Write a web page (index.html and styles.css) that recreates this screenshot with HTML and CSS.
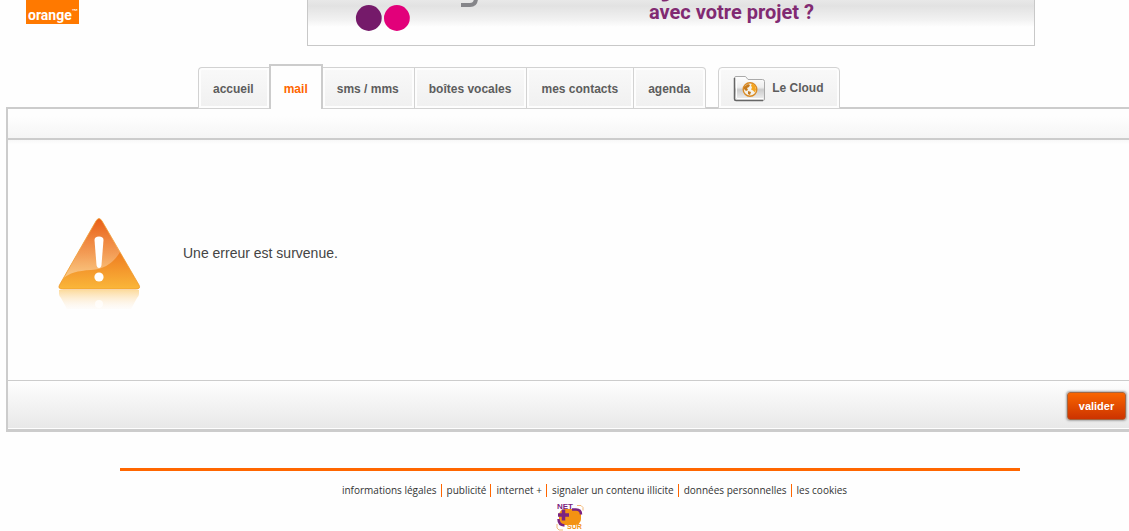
FILE: index.html
```
<!DOCTYPE html>
<html lang="fr">
<head>
    <meta charset="UTF-8">
    <meta name="viewport" content="width=device-width, initial-scale=1.0">
    <title>Orange - mail</title>
    <link rel="stylesheet" href="styles.css">
</head>
<body>

    <header class="header">
        <a class="logo" href="#"><span class="logo-name">orange</span><span class="logo-tm">™</span></a>
        <a class="banner" href="#">
            <svg class="banner-art" width="130" height="45" viewBox="0 0 130 45" aria-hidden="true">
                <circle cx="19.800" cy="18" r="12.900" fill="#751a6a"/>
                <circle cx="47.900" cy="18" r="12.900" fill="#e2007a"/>
                <path d="M112 5h9q6 0 6-7" fill="none" stroke="#858589" stroke-width="4"/>
            </svg>
            <span class="banner-text">
                <svg class="banner-tail" width="10" height="2" viewBox="0 0 10 2" aria-hidden="true">
                    <path d="M1 0q3 1.500 7-1" fill="none" stroke="#812a72" stroke-width="2"/>
                </svg>
                avec votre projet ?
            </span>
        </a>
    </header>

    <nav class="tabs">
        <a class="tab first" href="#">accueil</a>
        <a class="tab active" href="#">mail</a>
        <a class="tab" href="#">sms / mms</a>
        <a class="tab" href="#">boîtes vocales</a>
        <a class="tab" href="#">mes contacts</a>
        <a class="tab last" href="#">agenda</a>
        <a class="tab cloud" href="#">
            <svg width="33" height="27" viewBox="0 0 33 27" aria-hidden="true">
                <defs>
                    <linearGradient id="folder" x1="0" y1="0" x2="0" y2="1">
                        <stop offset="0" stop-color="#fff"/>
                        <stop offset=".45" stop-color="#eee"/>
                        <stop offset=".55" stop-color="#ccc"/>
                        <stop offset="1" stop-color="#f4f4f4"/>
                    </linearGradient>
                </defs>
                <path d="M1.500 24V3q0-1.500 1.500-1.500h9.500l2.500 3h14.500q2 0 2 2V24q0 1.500-1.500 1.500H3q-1.500 0-1.500-1.500z" fill="url(#folder)" stroke="#aaa"/>
                <path d="M1.500 3v21q0 1.500 1.500 1.500h27" fill="none" stroke="#666" stroke-width="1.500"/>
                <path d="M3.500 23V6M4 23.500h26" fill="none" stroke="#fff"/>
                <circle cx="17" cy="14.500" r="6.800" fill="#f4f1e8" stroke="#d98a24" stroke-width="1.400"/>
                <path d="M11 12l4-3 2 1-1 2-2 1 1 2-2 1-2-2z" fill="#c77a1b"/>
                <path d="M15 16l3 1-1 3-2-1z" fill="#c77a1b"/>
                <path d="M19 8.500l3 2 1 4-1 3-2-2-2-1 1-2-1-2z" fill="#f5a51e"/>
            </svg>
            <span>Le Cloud</span>
        </a>
    </nav>

    <main class="panel">
        <div class="toolbar"></div>
        <div class="message">
            <svg class="warning" width="86" height="94" viewBox="0 0 86 94" aria-hidden="true">
                <defs>
                    <linearGradient id="tri" x1="0" y1="0" x2="0" y2="1">
                        <stop offset="0" stop-color="#e95d16"/>
                        <stop offset=".5" stop-color="#ef7e22"/>
                        <stop offset="1" stop-color="#fab73a"/>
                    </linearGradient>
                    <linearGradient id="shine" x1="0" y1="0" x2="0" y2="1">
                        <stop offset="0" stop-color="#fff" stop-opacity="0"/>
                        <stop offset="1" stop-color="#fff" stop-opacity=".4"/>
                    </linearGradient>
                    <linearGradient id="mirror" x1="0" y1="0" x2="0" y2="1">
                        <stop offset="0" stop-color="#fab73a" stop-opacity=".5"/>
                        <stop offset="1" stop-color="#fce8d4" stop-opacity=".1"/>
                    </linearGradient>
                </defs>
                <path d="M3 73h80v4q0 2-2 4l-6 11H11L5 81q-2-2-2-4z" fill="url(#mirror)"/>
                <ellipse cx="43" cy="87" rx="4" ry="4" fill="#fff" opacity=".7"/>
                <path d="M40 4q3-5 6 0l37 64q2 4-3 4H6.500q-5 0-3-4z" fill="url(#tri)" stroke="#f09a2c" stroke-width=".8"/>
                <path d="M40 4q3-5 6 0l18 31Q54 52 35 53 15 54 8 61z" fill="url(#shine)"/>
                <path d="M38.500 23q0-3.500 4.500-3.500t4.500 3.500L45.500 48q-.5 3-2.500 3t-2.500-3z" fill="#fff"/>
                <circle cx="43" cy="60" r="4.600" fill="#fff"/>
            </svg>
            <p>Une erreur est survenue.</p>
        </div>
        <div class="actions">
            <button type="button" class="valider">valider</button>
        </div>
    </main>

    <footer class="footer">
        <div class="footer-inner">
            <ul class="links">
                <li><a href="#">informations légales</a></li>
                <li><a href="#">publicité</a></li>
                <li><a href="#">internet +</a></li>
                <li><a href="#">signaler un contenu illicite</a></li>
                <li><a href="#">données personnelles</a></li>
                <li><a href="#">les cookies</a></li>
            </ul>
            <a class="netplus" href="#" aria-label="Net + sûr">
                <svg width="28" height="28" viewBox="0 0 28 28">
                    <rect x="3" y="6" width="22" height="16" rx="6" fill="#f39213"/>
                    <path d="M16 6.500h4q5 0 5 5" fill="none" stroke="#7b2380" stroke-width="2.500"/>
                    <path d="M2.500 16q0 6 6 6.500" fill="none" stroke="#7b2380" stroke-width="2.500"/>
                    <path d="M7.500 6.500v11M2 12h11" stroke="#7b2380" stroke-width="3.500"/>
                    <path d="M21 2.500h4l2 2v3M1 21v4l2 2h4" fill="none" stroke="#f3b978"/>
                    <text x="1" y="6" class="np-net">NET</text>
                    <text x="11" y="26" class="np-sur">SÛR</text>
                </svg>
            </a>
        </div>
    </footer>

</body>
</html>
```
FILE: styles.css
```
body {
    font-family: "Liberation Sans", Arial, Helvetica, sans-serif;
    background-color: #fefefe;
    margin: 0;
    color: #333;
}
a {
    color: inherit;
    text-decoration: none;
}

/* header */
.header {
    display: flex;
    justify-content: space-between;
    align-items: flex-start;
    padding: 0 94px 0 26px;
}
.logo {
    display: flex;
    align-items: flex-start;
    box-sizing: border-box;
    height: 24px;
    width: 53px;
    padding: 7px 0 0 2px;
    background-color: #ff7900;
    color: #fff;
    font-weight: bold;
    font-size: 14px;
    line-height: 16px;
}
.logo-name {
    font-family: Roboto, sans-serif;
}
.logo-tm {
    font-size: 6px;
    line-height: 8px;
}
.banner {
    display: flex;
    box-sizing: border-box;
    width: 728px;
    height: 46px;
    padding-left: 41px;
    border: 1px solid #c8c8c8;
    border-top: 0;
    background: linear-gradient(#e8e8e8 0, #e2e2e2 6px, #f2f2f2 20px, #fefefe 27px);
}
.banner-text {
    display: flex;
    flex-direction: column;
    margin-left: 170px;
    color: #812a72;
    font-family: Roboto, sans-serif;
    font-size: 20px;
    font-weight: bold;
    line-height: 20px;
    white-space: nowrap;
}
.banner-tail {
    margin-left: 12px;
}

/* tabs */
.tabs {
    display: flex;
    align-items: flex-end;
    margin: 18px 0 -2px 198px;
    position: relative;
    z-index: 1;
}
.tab {
    box-sizing: border-box;
    height: 42px;
    padding: 0 15px 0 14px;
    border: 1px solid #d2d2d2;
    border-left: 0;
    background: linear-gradient(#f9f9f9, #f0f0f0);
    box-shadow: inset 0 0 0 2px #fdfdfd;
    color: #5d5d5d;
    font-size: 12px;
    font-weight: bold;
    line-height: 43px;
    white-space: nowrap;
}
.tab.first {
    border-left: 1px solid #d2d2d2;
    border-right: 0;
    border-radius: 4px 0 0 0;
}
.tab.active {
    height: 45px;
    padding: 0 13px;
    border: 2px solid #ccc;
    border-bottom: 0;
    background: #fefefe;
    box-shadow: none;
    color: #ff6600;
    line-height: 46px;
}
.tab.last {
    border-radius: 0 4px 0 0;
}
.tab.cloud {
    display: flex;
    align-items: center;
    gap: 6px;
    margin-left: 12px;
    border-left: 1px solid #d2d2d2;
    border-radius: 4px 4px 0 0;
}

/* panel */
.panel {
    margin-left: 6px;
    border: 2px solid #ccc;
    border-right: 0;
    border-bottom-width: 3px;
}
.toolbar {
    height: 29px;
    border-bottom: 2px solid #ccc;
    background: linear-gradient(#fefefe 25%, #f5f5f5);
}
.message {
    display: flex;
    gap: 41px;
    padding: 77px 48px 69px;
    background: linear-gradient(#f8f8f8, #fefefe 4px);
}
.message p {
    margin: 26px 0 0;
    color: #444;
    font-size: 14px;
    line-height: 20px;
}
.actions {
    display: flex;
    justify-content: flex-end;
    padding: 11px 3px 8px;
    border-top: 1px solid #ccc;
    border-bottom: 1px solid #fefefe;
    background: linear-gradient(#fefefe, #e8e8e8);
}
.valider {
    width: 59px;
    height: 28px;
    padding: 0;
    border: 1px solid #a5653f;
    border-radius: 3px;
    background: linear-gradient(#f96500, #cc3300);
    box-shadow: 0 0 2px 1px #aaa;
    color: #fff;
    font-family: inherit;
    font-size: 11px;
    font-weight: bold;
    cursor: pointer;
}

/* footer */
.footer {
    padding: 36px 0 0 11px;
}
.footer-inner {
    max-width: 900px;
    margin: 0 auto;
    border-top: 3px solid #ff6600;
}
.links {
    display: flex;
    justify-content: center;
    margin: 0;
    padding: 13px 0 6px 48px;
    list-style: none;
    font-family: "Open Sans", sans-serif;
    font-size: 10px;
    line-height: 13px;
    white-space: nowrap;
}
.links li {
    padding: 0 4px 0 5px;
}
.links li + li {
    border-left: 1px solid #ff6600;
}
.netplus {
    display: block;
    width: 28px;
    margin: 0 auto;
}
.netplus svg {
    display: block;
}
.np-net,
.np-sur {
    font-size: 8px;
    font-weight: bold;
    fill: #7b2380;
}
.np-sur {
    font-size: 7px;
    fill: #f39213;
}
```
